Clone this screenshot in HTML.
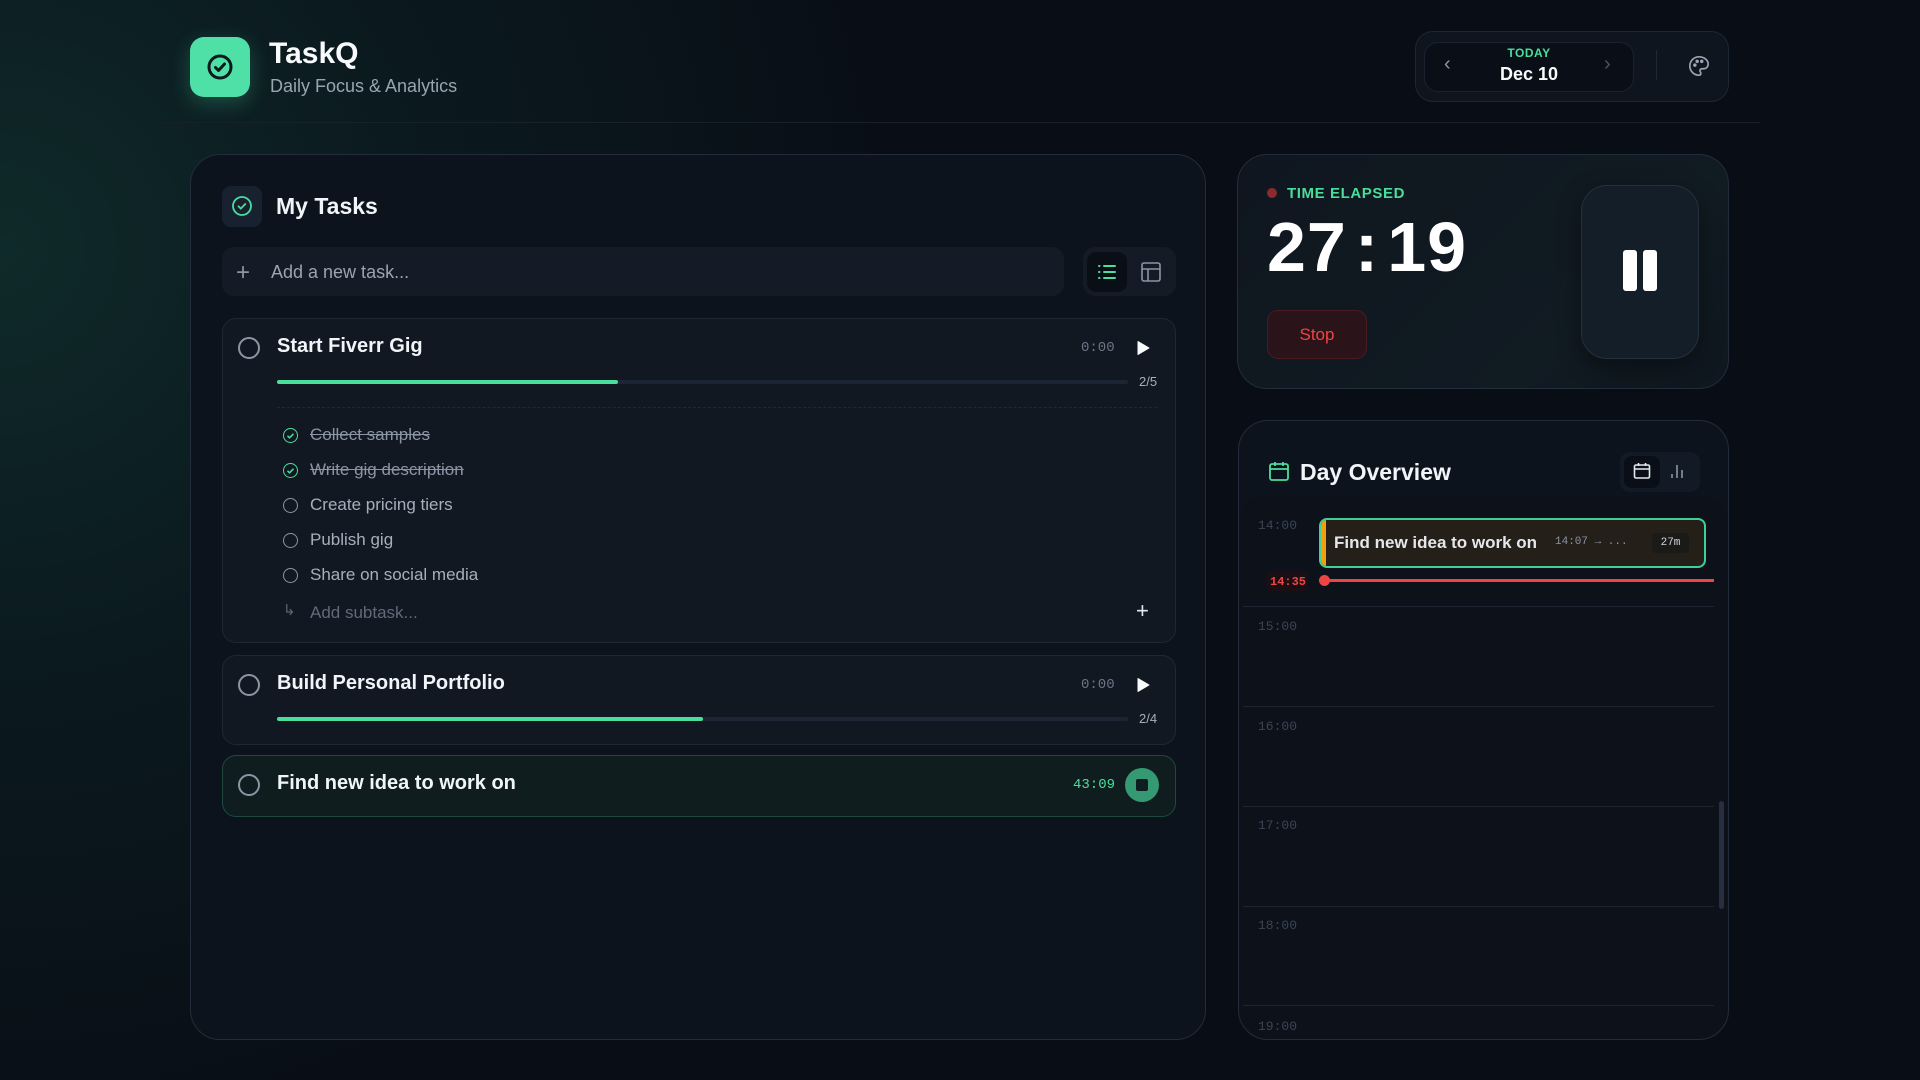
<!DOCTYPE html>
<html><head><meta charset="utf-8"><style>
*{box-sizing:border-box;margin:0;padding:0}
body{width:1920px;height:1080px;overflow:hidden;font-family:"Liberation Sans",sans-serif;color:#f1f5f9;
background:radial-gradient(ellipse 900px 900px at 0px 250px,#0f2a2a 0%,#0b1a1f 45%,#090e16 100%);background-color:#090e16;position:relative}
.a{position:absolute}
.mono{font-family:"Liberation Mono",monospace}
.panel{position:absolute;background:#0d131c;border:1px solid #222c3a;border-radius:30px}
.card{position:absolute;background:#121822;border:1px solid #1e2734;border-radius:14px}
.circ{position:absolute;width:22px;height:22px;border:2px solid #8b95a5;border-radius:50%}
.bar{position:absolute;height:4px;background:#1c2533;border-radius:2px}
.bar i{display:block;height:100%;background:#4ade9c;border-radius:2px}
.sub{position:absolute;left:310px;font-size:17px;color:#a6afbd}
.sc{position:absolute;left:283px;width:15px;height:15px;border:1.6px solid #8b95a5;border-radius:50%}
.sc.d{border-color:#4ade9c}
.hl{position:absolute;left:1258px;font-size:13px;color:#3a4556}
.ln{position:absolute;left:1243px;width:471px;height:1px;background:#1c2431}
</style></head><body>
<div class="a" style="left:190px;top:37px;width:60px;height:60px;border-radius:14px;background:#4fe0a8;box-shadow:0 6px 20px rgba(79,224,168,.25)"></div>
<svg class="a" style="left:204px;top:51px" width="32" height="32" viewBox="0 0 32 32"><circle cx="16" cy="16" r="11" fill="none" stroke="#0b1a1a" stroke-width="3"/><path d="M11.5 16.5l3 3 6-6.5" fill="none" stroke="#0b1a1a" stroke-width="3" stroke-linecap="round" stroke-linejoin="round"/></svg>
<div class="a" style="left:269px;top:37px;font-size:30px;font-weight:bold;color:#f8fafc">TaskQ</div>
<div class="a" style="left:270px;top:76px;font-size:18px;color:#9aa4b2">Daily Focus &amp; Analytics</div>
<div class="a" style="left:160px;top:122px;width:1600px;height:1px;background:#18202b"></div>

<div class="a" style="left:1415px;top:31px;width:314px;height:71px;border-radius:18px;background:#0f151e;border:1px solid #1d2633"></div>
<div class="a" style="left:1424px;top:42px;width:210px;height:50px;border-radius:14px;background:#0a0f17;border:1px solid #1a2230"></div>
<div class="a" style="left:1444px;top:53px;font-size:20px;color:#8b95a5">&#8249;</div>
<div class="a" style="left:1604px;top:53px;font-size:20px;color:#4a5565">&#8250;</div>
<div class="a" style="left:1424px;top:46px;width:210px;text-align:center;font-size:12px;font-weight:bold;color:#4ade9c;letter-spacing:.5px">TODAY</div>
<div class="a" style="left:1424px;top:64px;width:210px;text-align:center;font-size:18px;font-weight:bold;color:#f8fafc">Dec 10</div>
<div class="a" style="left:1656px;top:50px;width:1px;height:30px;background:#1f2836"></div>
<svg class="a" style="left:1688px;top:55px" width="22" height="22" viewBox="0 0 24 24" fill="none" stroke="#9aa4b2" stroke-width="1.8"><path d="M12 2a10 10 0 0 0 0 20c1.5 0 2-1 2-2 0-1.5-1-1.5-1-3 0-1 1-2 2-2h2a5 5 0 0 0 5-5c0-4.5-4.5-8-10-8z"/><circle cx="7.5" cy="11" r="1" fill="#9aa4b2"/><circle cx="10" cy="7" r="1" fill="#9aa4b2"/><circle cx="15" cy="7" r="1" fill="#9aa4b2"/></svg>

<div class="panel" style="left:190px;top:154px;width:1016px;height:886px"></div>
<div class="a" style="left:222px;top:186px;width:40px;height:41px;border-radius:9px;background:#182130"></div>
<svg class="a" style="left:231px;top:195px" width="22" height="22" viewBox="0 0 22 22"><circle cx="11" cy="11" r="9" fill="none" stroke="#4ade9c" stroke-width="1.8"/><path d="M7.5 11.3l2.3 2.3 4.5-4.6" fill="none" stroke="#4ade9c" stroke-width="1.8" stroke-linecap="round"/></svg>
<div class="a" style="left:276px;top:193px;font-size:23px;font-weight:bold">My Tasks</div>

<div class="a" style="left:222px;top:247px;width:842px;height:49px;border-radius:12px;background:#141b26"></div>
<div class="a" style="left:236px;top:259px;font-size:24px;color:#8b95a5;font-weight:300">+</div>
<div class="a" style="left:271px;top:262px;font-size:18px;color:#9aa4b2">Add a new task...</div>
<div class="a" style="left:1083px;top:247px;width:93px;height:49px;border-radius:12px;background:#141b26"></div>
<div class="a" style="left:1087px;top:252px;width:40px;height:40px;border-radius:9px;background:#0a0f17"></div>
<svg class="a" style="left:1095px;top:260px" width="24" height="24" viewBox="0 0 24 24" stroke="#4ade9c" stroke-width="2" stroke-linecap="round"><path d="M9 6h11M9 12h11M9 18h11M4 6h.5M4 12h.5M4 18h.5"/></svg>
<svg class="a" style="left:1140px;top:261px" width="22" height="22" viewBox="0 0 22 22" fill="none" stroke="#8b95a5" stroke-width="1.6"><rect x="2" y="2" width="18" height="18" rx="2"/><path d="M2 8h18M8 8v12"/></svg>

<div class="card" style="left:222px;top:318px;width:954px;height:325px"></div>
<div class="circ" style="left:238px;top:337px"></div>
<div class="a" style="left:277px;top:335px;font-size:20px;font-weight:bold">Start Fiverr Gig</div>
<div class="a mono" style="left:1081px;top:340px;font-size:14px;color:#6b7585">0:00</div>
<svg class="a" style="left:1135px;top:340px" width="16" height="16" viewBox="0 0 16 16"><path d="M3 1.5L14 8 3 14.5z" fill="#f8fafc" stroke="#f8fafc" stroke-linejoin="round"/></svg>
<div class="bar" style="left:277px;top:380px;width:851px"><i style="width:341px"></i></div>
<div class="a" style="left:1139px;top:374px;font-size:13px;color:#a6afbd">2/5</div>
<div class="a" style="left:277px;top:407px;width:880px;border-top:1px dashed #1f2836"></div>
<div class="sc d" style="top:428px"></div><svg class="a" style="left:283px;top:428px" width="15" height="15"><path d="M4.5 7.8l2 2 4-4" fill="none" stroke="#4ade9c" stroke-width="1.5"/></svg>
<div class="sub" style="top:425px;text-decoration:line-through;color:#8b95a5">Collect samples</div>
<div class="sc d" style="top:463px"></div><svg class="a" style="left:283px;top:463px" width="15" height="15"><path d="M4.5 7.8l2 2 4-4" fill="none" stroke="#4ade9c" stroke-width="1.5"/></svg>
<div class="sub" style="top:460px;text-decoration:line-through;color:#8b95a5">Write gig description</div>
<div class="sc" style="top:498px"></div><div class="sub" style="top:495px">Create pricing tiers</div>
<div class="sc" style="top:533px"></div><div class="sub" style="top:530px">Publish gig</div>
<div class="sc" style="top:568px"></div><div class="sub" style="top:565px">Share on social media</div>
<div class="a" style="left:283px;top:601px;font-size:15px;color:#5a6474">&#8627;</div>
<div class="sub" style="top:603px;color:#5f6a7a">Add subtask...</div>
<div class="a" style="left:1136px;top:598px;font-size:22px;color:#e2e8f0">+</div>

<div class="card" style="left:222px;top:655px;width:954px;height:90px"></div>
<div class="circ" style="left:238px;top:674px"></div>
<div class="a" style="left:277px;top:672px;font-size:20px;font-weight:bold">Build Personal Portfolio</div>
<div class="a mono" style="left:1081px;top:677px;font-size:14px;color:#6b7585">0:00</div>
<svg class="a" style="left:1135px;top:677px" width="16" height="16" viewBox="0 0 16 16"><path d="M3 1.5L14 8 3 14.5z" fill="#f8fafc" stroke="#f8fafc" stroke-linejoin="round"/></svg>
<div class="bar" style="left:277px;top:717px;width:851px"><i style="width:426px"></i></div>
<div class="a" style="left:1139px;top:711px;font-size:13px;color:#a6afbd">2/4</div>

<div class="a" style="left:222px;top:755px;width:954px;height:62px;border-radius:14px;background:#0f1d1f;border:1px solid #1c4a3e"></div>
<div class="circ" style="left:238px;top:774px"></div>
<div class="a" style="left:277px;top:772px;font-size:20px;font-weight:bold">Find new idea to work on</div>
<div class="a mono" style="left:1073px;top:777px;font-size:14px;color:#4ade9c">43:09</div>
<div class="a" style="left:1125px;top:768px;width:34px;height:34px;border-radius:50%;background:#359a73"></div>
<div class="a" style="left:1136px;top:779px;width:12px;height:12px;border-radius:2px;background:#0f1d1f"></div>

<div class="panel" style="left:1237px;top:154px;width:492px;height:235px;background:linear-gradient(135deg,#0f161f,#111b22 70%,#0f171f)"></div>
<div class="a" style="left:1267px;top:188px;width:10px;height:10px;border-radius:50%;background:#8b2b2f"></div>
<div class="a" style="left:1287px;top:185px;font-size:15px;font-weight:bold;color:#4ade9c;letter-spacing:.6px">TIME ELAPSED</div>
<div class="a" style="left:1267px;top:207px;font-size:70px;font-weight:bold;color:#fff;letter-spacing:1px">27<span style="margin:0 8px">:</span>19</div>
<div class="a" style="left:1267px;top:310px;width:100px;height:49px;border-radius:11px;background:#2a1419;border:1px solid #4a1c22;color:#ef4444;font-size:17px;text-align:center;line-height:47px">Stop</div>
<div class="a" style="left:1581px;top:185px;width:118px;height:174px;border-radius:26px;background:#141e28;border:1px solid #25303e;box-shadow:0 8px 24px rgba(0,0,0,.4)"></div>
<div class="a" style="left:1623px;top:250px;width:14px;height:41px;border-radius:3px;background:#fff"></div>
<div class="a" style="left:1643px;top:250px;width:14px;height:41px;border-radius:3px;background:#fff"></div>

<div class="panel" style="left:1238px;top:420px;width:491px;height:620px"></div>
<svg class="a" style="left:1268px;top:460px" width="22" height="22" viewBox="0 0 22 22" fill="none" stroke="#4ade9c" stroke-width="1.8"><rect x="2" y="4" width="18" height="16" rx="2"/><path d="M2 9h18M7 2v4M15 2v4"/></svg>
<div class="a" style="left:1300px;top:459px;font-size:23px;font-weight:bold">Day Overview</div>
<div class="a" style="left:1620px;top:452px;width:80px;height:40px;border-radius:10px;background:#121a25"></div>
<div class="a" style="left:1624px;top:456px;width:36px;height:32px;border-radius:8px;background:#0a0f17"></div>
<svg class="a" style="left:1633px;top:462px" width="18" height="18" viewBox="0 0 18 18" fill="none" stroke="#e2e8f0" stroke-width="1.6"><rect x="1.5" y="3" width="15" height="13" rx="1.5"/><path d="M1.5 7h15M5.5 1v3M12.5 1v3"/></svg>
<svg class="a" style="left:1668px;top:462px" width="18" height="18" viewBox="0 0 18 18" stroke="#8b95a5" stroke-width="1.6"><path d="M4 16v-4M9 16V3M14 16V8"/></svg>
<div class="a" style="left:1240px;top:496px;width:487px;height:542px;border-radius:22px 22px 28px 28px;background:#0c111a"></div>
<div class="hl mono" style="top:518px">14:00</div>
<div class="ln" style="top:606px"></div><div class="hl mono" style="top:619px">15:00</div>
<div class="ln" style="top:706px"></div><div class="hl mono" style="top:719px">16:00</div>
<div class="ln" style="top:806px"></div><div class="hl mono" style="top:818px">17:00</div>
<div class="ln" style="top:906px"></div><div class="hl mono" style="top:918px">18:00</div>
<div class="ln" style="top:1005px"></div><div class="hl mono" style="top:1019px">19:00</div>
<div class="a" style="left:1319px;top:518px;width:387px;height:50px;border-radius:8px;background:#241f18;border:2px solid #3fd097;overflow:hidden"><div style="width:5px;height:100%;background:#f59e0b"></div></div>
<div class="a" style="left:1334px;top:533px;font-size:17px;font-weight:bold;color:#e5e7eb">Find new idea to work on</div>
<div class="a mono" style="left:1555px;top:536px;font-size:11px;color:#8b95a5">14:07 &#8594; ...</div>
<div class="a mono" style="left:1652px;top:533px;width:37px;height:20px;border-radius:4px;background:#1a1a17;font-size:11px;color:#d1d5db;text-align:center;line-height:20px">27m</div>
<div class="a" style="left:1266px;top:571px;width:42px;height:20px;border-radius:5px;background:#1a0f14"></div>
<div class="a mono" style="left:1270px;top:575px;font-size:12px;font-weight:bold;color:#ef4444">14:35</div>
<div class="a" style="left:1324px;top:579px;width:390px;height:3px;background:#ef4444"></div>
<div class="a" style="left:1319px;top:575px;width:11px;height:11px;border-radius:50%;background:#ef4444"></div>
<div class="a" style="left:1719px;top:801px;width:5px;height:108px;border-radius:3px;background:#263040"></div>
</body></html>
